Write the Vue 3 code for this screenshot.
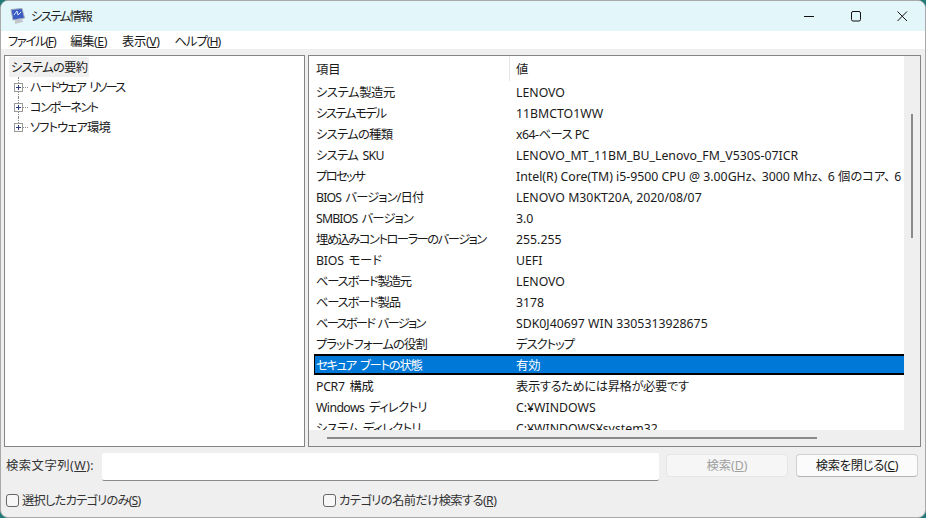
<template>
  <div class="desktop">
    <div class="window">
      <header class="titlebar">
        <svg class="app-icon" width="16" height="16" viewBox="0 0 16 16">
          <path d="M1 1.5 L12 0.5 L14.5 10 L3 12 Z" fill="#3a5cc4" stroke="#a4aabb" stroke-width="1" />
          <path d="M4 7 L7 3 L8 7 L11 4" fill="none" stroke="#dbe8ff" stroke-width="1" />
          <path d="M5 12 L12 11 L13 14 L5 16 Z" fill="#c2c5cc" />
        </svg>
        <span class="title">システム情報</span>
        <div class="controls">
          <svg class="ctl" width="46" height="30" viewBox="0 0 46 30"><path d="M17 15.5 H27" stroke="#111" stroke-width="1" /></svg>
          <svg class="ctl" width="46" height="30" viewBox="0 0 46 30"><rect x="18.5" y="10.5" width="9" height="9.5" rx="1.5" fill="none" stroke="#111" stroke-width="1" /></svg>
          <svg class="ctl" width="46" height="30" viewBox="0 0 46 30"><path d="M18.5 10.5 L28 20 M28 10.5 L18.5 20" stroke="#111" stroke-width="1" /></svg>
        </div>
      </header>

      <nav class="menubar">
        <span v-for="m in menus" :key="m.label" class="menu" :style="{ letterSpacing: m.track + 'px' }">{{ m.label }}(<u>{{ m.key }}</u>)</span>
      </nav>

      <div class="panes">
        <aside class="pane tree">
          <div class="tree-root"><span class="root-label">システムの要約</span></div>
          <div v-for="(node, i) in tree" :key="node.label" class="tree-node">
            <span class="guide" :class="{ last: i === tree.length - 1 }"></span>
            <span class="expander">
              <svg width="9" height="9" viewBox="0 0 9 9">
                <rect x="0.5" y="0.5" width="8" height="8" fill="#fff" stroke="#9a9a9a" />
                <path d="M2 4.5 H7 M4.5 2 V7" stroke="#2f3f7f" />
              </svg>
            </span>
            <span class="tick"></span>
            <span class="node-label" :style="{ letterSpacing: node.track + 'px' }">{{ node.label }}</span>
          </div>
        </aside>

        <section class="pane details">
          <div class="table-area">
            <div class="table-head">
              <span class="col-item">項目</span>
              <span class="col-value head-value">値</span>
            </div>
            <div class="table-body">
              <div v-for="row in rows" :key="row.item" class="row" :class="{ selected: row.selected }">
                <span class="col-item" :style="{ letterSpacing: (row.track || 0) + 'px' }">{{ row.item }}</span>
                <span class="col-value" :style="{ letterSpacing: (row.valueTrack || 0) + 'px' }">{{ row.value }}</span>
              </div>
            </div>
          </div>
          <div class="vscroll"><span class="vthumb"></span></div>
          <div class="hscroll"><span class="hthumb"></span></div>
        </section>
      </div>

      <div class="search-row">
        <label class="search-label">検索文字列(<u>W</u>):</label>
        <div class="search-input"></div>
        <button class="btn disabled">検索(<u>D</u>)</button>
        <button class="btn close">検索を閉じる(<u>C</u>)</button>
      </div>

      <div class="check-row">
        <label class="check first"><span class="box"></span>選択したカテゴリのみ(<u>S</u>)</label>
        <label class="check second"><span class="box"></span>カテゴリの名前だけ検索する(<u>R</u>)</label>
      </div>
    </div>
  </div>
</template>

<script setup>
const menus = [
  { label: 'ファイル', key: 'F', track: -1.3 },
  { label: '編集', key: 'E', track: -0.4 },
  { label: '表示', key: 'V', track: -0.4 },
  { label: 'ヘルプ', key: 'H', track: -1 },
]

const tree = [
  { label: 'ハードウェア リソース', track: -1.9 },
  { label: 'コンポーネント', track: -1.6 },
  { label: 'ソフトウェア環境', track: -0.9 },
]

const rows = [
  { item: 'システム製造元', value: 'LENOVO', track: -0.4 },
  { item: 'システムモデル', value: '11BMCTO1WW', track: -1.4 },
  { item: 'システムの種類', value: 'x64-ベース PC', track: -0.7, valueTrack: -0.5 },
  { item: 'システム SKU', value: 'LENOVO_MT_11BM_BU_Lenovo_FM_V530S-07ICR', track: -0.7 },
  { item: 'プロセッサ', value: 'Intel(R) Core(TM) i5-9500 CPU @ 3.00GHz、\u20043000 Mhz、\u20046 個のコア、\u20046 個のロジカル プロセッサ', track: -1.6 },
  { item: 'BIOS バージョン/日付', value: 'LENOVO M30KT20A, 2020/08/07', track: -0.85 },
  { item: 'SMBIOS バージョン', value: '3.0', track: -0.85 },
  { item: '埋め込みコントローラーのバージョン', value: '255.255', track: -1.5 },
  { item: 'BIOS モード', value: 'UEFI', track: -0.2 },
  { item: 'ベースボード製造元', value: 'LENOVO', track: -1.2 },
  { item: 'ベースボード製品', value: '3178', track: -1.2 },
  { item: 'ベースボード バージョン', value: 'SDK0J40697 WIN 3305313928675', track: -1.75 },
  { item: 'プラットフォームの役割', value: 'デスクトップ', track: -0.9, valueTrack: -1 },
  { item: 'セキュア ブートの状態', value: '有効', track: -1.2, selected: true },
  { item: 'PCR7 構成', value: '表示するためには昇格が必要です', track: -0.3, valueTrack: -0.4 },
  { item: 'Windows ディレクトリ', value: 'C:¥WINDOWS', track: -0.6 },
  { item: 'システム ディレクトリ', value: 'C:¥WINDOWS¥system32', track: -0.6 },
]
</script>

<style>
html, body {
  margin: 0;
  background: #1f7a78;
}
</style>

<style scoped>
.desktop {
  width: 926px;
  height: 518px;
  overflow: hidden;
  font-family: "Noto Sans", "Noto Sans CJK JP", sans-serif;
  font-size: 12.3px;
  font-feature-settings: "palt";
  color: #1a1a1a;
}

.window {
  box-sizing: border-box;
  width: 926px;
  height: 518px;
  border: 1px solid #a9a9a9;
  border-radius: 8px;
  background: #efefef;
  overflow: hidden;
  display: flex;
  flex-direction: column;
}

.titlebar {
  flex: none;
  height: 30px;
  background: #e3f6f9;
  display: flex;
  align-items: center;
  padding-left: 9px;
}

.app-icon {
  margin-right: 5px;
}

.title {
  flex: 1;
  color: #222;
  letter-spacing: -1.5px;
}

.controls {
  display: flex;
}

.ctl {
  display: block;
}

.menubar {
  flex: none;
  box-sizing: border-box;
  height: 18px;
  padding-top: 2px;
  background: #fff;
  display: flex;
  align-items: center;
  gap: 15px;
  padding-left: 7px;
}

.panes {
  flex: none;
  height: 392px;
  margin-top: 6px;
  padding: 0 4px 0 3px;
  display: flex;
  gap: 3px;
}

.pane {
  box-sizing: border-box;
  border: 1px solid #848484;
  background: #fff;
  height: 392px;
}

.tree {
  width: 301px;
  padding: 1px 0 0 4px;
}

.tree-root {
  height: 20px;
  display: flex;
  align-items: center;
}

.root-label {
  background: #f0f0f0;
  height: 20px;
  line-height: 22px;
  padding: 0 2px;
  white-space: nowrap;
  letter-spacing: -0.7px;
}

.tree-node {
  position: relative;
  height: 20px;
  display: flex;
  align-items: center;
  padding-left: 5px;
}

.node-label {
  word-spacing: 3px;
}

.guide {
  position: absolute;
  left: 9px;
  top: 0;
  height: 20px;
  border-left: 1px dotted #8a8a8a;
}

.guide.last {
  height: 10px;
}

.expander {
  position: relative;
  width: 9px;
  height: 9px;
  display: block;
  line-height: 0;
}

.tick {
  width: 5px;
  border-top: 1px dotted #8a8a8a;
  margin-right: 2px;
}

.details {
  position: relative;
  flex: 1;
  overflow: hidden;
}

.table-area {
  height: 375px;
  width: 595px;
  overflow: hidden;
}

.table-head {
  display: flex;
  height: 25px;
  align-items: center;
}

.table-body {
  padding-left: 5px;
}

.head-value {
  border-left: 1px solid #e5e5e5;
  height: 25px;
  line-height: 27px;
}

.row {
  box-sizing: border-box;
  display: flex;
  height: 21px;
  padding-top: 1px;
  align-items: center;
  white-space: nowrap;
}

.col-item {
  flex: none;
  width: 194px;
  padding-left: 2px;
  word-spacing: 2px;
}

.table-head .col-item {
  width: 193px;
  padding-left: 7px;
}

.col-value {
  flex: none;
  padding-left: 6px;
}

.row.selected {
  background: #0078d7;
  color: #fff;
  border-top: 2px solid #000;
  border-bottom: 2px solid #000;
  box-shadow: inset 1px 0 #000;
  padding-top: 0;
}

.vscroll {
  position: absolute;
  right: 0;
  top: 0;
  width: 16px;
  height: 375px;
  background: #efefef;
}

.vthumb {
  position: absolute;
  left: 7px;
  top: 58px;
  width: 2px;
  height: 124px;
  background: #8a8a8a;
}

.hscroll {
  position: absolute;
  left: 0;
  bottom: 0;
  width: 100%;
  height: 16px;
  background: #efefef;
}

.hthumb {
  position: absolute;
  left: 18px;
  top: 7px;
  width: 490px;
  height: 2px;
  background: #8a8a8a;
}

.search-row {
  flex: none;
  display: flex;
  align-items: center;
  height: 30px;
  margin-top: 5px;
  padding-left: 5px;
}

.search-label {
  width: 96px;
  padding-bottom: 4px;
  color: #333;
  letter-spacing: 0.5px;
  white-space: nowrap;
}

.search-input {
  box-sizing: border-box;
  width: 557px;
  height: 28px;
  background: #fff;
  border-bottom: 1px solid #8a8a8a;
  border-radius: 2px;
  margin-right: 7px;
}

.btn {
  box-sizing: border-box;
  width: 122px;
  height: 23px;
  margin-bottom: 4px;
  padding: 0;
  background: #fbfbfb;
  border: 1px solid #d0d0d0;
  border-bottom-color: #b5b5b5;
  border-radius: 4px;
  font: inherit;
  font-feature-settings: inherit;
  color: #1a1a1a;
}

.btn.close {
  letter-spacing: -0.3px;
}

.btn.disabled {
  margin-right: 8px;
  background: #f6f6f6;
  border-color: #e6e6e6;
  color: #a0a0a0;
}

.check-row {
  flex: none;
  display: flex;
  align-items: center;
  height: 20px;
  margin-top: 8px;
  padding-left: 5px;
}

.check {
  display: flex;
  align-items: center;
  color: #333;
  white-space: nowrap;
}

.check.first {
  width: 317px;
  letter-spacing: -0.8px;
}

.check.second {
  letter-spacing: -0.6px;
}

.box {
  box-sizing: border-box;
  flex: none;
  width: 13px;
  height: 13px;
  border: 1px solid #666;
  border-radius: 3px;
  background: #f7f7f7;
  margin-right: 3px;
}
</style>
